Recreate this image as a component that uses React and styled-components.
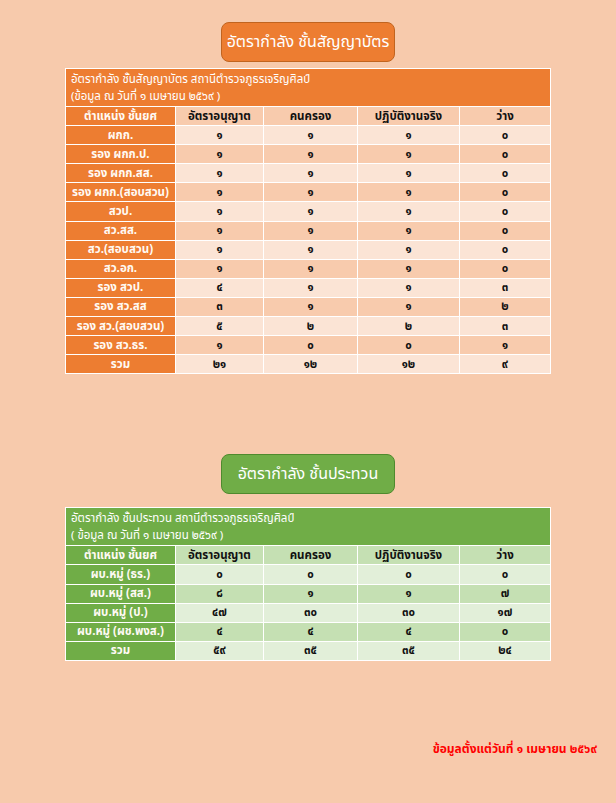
import React from "react";
import styled, { createGlobalStyle } from "styled-components";

const GlobalStyle = createGlobalStyle`
  html, body {
    margin: 0;
    padding: 0;
    background: #f7caac;
  }
  body {
    font-family: Tahoma, "Noto Sans Thai", "Noto Sans", "DejaVu Sans", sans-serif;
  }
`;

const themes = {
  orange: {
    main: "#ed7d31",
    edge: "#c1641f",
    light: "#fbe4d5",
    mid: "#f8cbad",
  },
  green: {
    main: "#70ad47",
    edge: "#4f8a2e",
    light: "#e2efd9",
    mid: "#c5e0b3",
  },
};

const Page = styled.div`
  width: 616px;
  min-height: 803px;
  padding-top: 22px;
  box-sizing: border-box;
  display: flex;
  flex-direction: column;
  align-items: center;
`;

const Section = styled.section`
  display: flex;
  flex-direction: column;
  align-items: center;
  margin-bottom: ${(p) => p.$after}px;
`;

const Pill = styled.div`
  width: 174px;
  height: 40px;
  box-sizing: border-box;
  display: flex;
  align-items: center;
  justify-content: center;
  background: ${(p) => p.$t.main};
  border: 1px solid ${(p) => p.$t.edge};
  border-radius: 8px;
  color: #fff;
  font-size: 16px;
  margin-bottom: ${(p) => p.$gap}px;
`;

const Table = styled.table`
  width: 485px;
  border-collapse: collapse;
  border: 1px solid #fff;
  font-size: 11.5px;
  table-layout: fixed;
`;

const TitleCell = styled.td`
  background: ${(p) => p.$t.main};
  color: #fff;
  text-align: left;
  padding: 2px 5px 1px;
  line-height: 17px;
  border: 1px solid #fff;
`;

const Cell = styled.td`
  height: 18.1px;
  padding: 0;
  line-height: 15px;
  border: 1px solid #fff;
  text-align: center;
  color: #111;
  font-weight: bold;
  background: ${(p) => (p.$alt ? p.$t.mid : p.$t.light)};
`;

const RankCell = styled(Cell)`
  background: ${(p) => p.$t.main};
  color: #fffaf4;
`;

const Footer = styled.div`
  align-self: flex-end;
  margin-right: 19px;
  color: #ff0000;
  font-weight: bold;
  font-size: 12px;
`;

const widths = [110, 88, 94, 102, 91];

function RateTable({ t, title, note, rows }) {
  return (
    <Table>
      <colgroup>
        {widths.map((w, i) => (
          <col key={i} style={{ width: w }} />
        ))}
      </colgroup>
      <tbody>
        <tr>
          <TitleCell $t={t} colSpan={5}>
            {title}
            <br />
            {note}
          </TitleCell>
        </tr>
        <tr>
          <RankCell $t={t}>ตำแหน่ง ชั้นยศ</RankCell>
          {["อัตราอนุญาต", "คนครอง", "ปฏิบัติงานจริง", "ว่าง"].map((h) => (
            <Cell key={h} $t={t} $alt>
              {h}
            </Cell>
          ))}
        </tr>
        {rows.map((r, i) => (
          <tr key={r[0]}>
            <RankCell $t={t}>{r[0]}</RankCell>
            {r.slice(1).map((v, j) => (
              <Cell key={j} $t={t} $alt={i % 2 === 1}>
                {v}
              </Cell>
            ))}
          </tr>
        ))}
      </tbody>
    </Table>
  );
}

const officers = [
  ["ผกก.", "๑", "๑", "๑", "๐"],
  ["รอง ผกก.ป.", "๑", "๑", "๑", "๐"],
  ["รอง ผกก.สส.", "๑", "๑", "๑", "๐"],
  ["รอง ผกก.(สอบสวน)", "๑", "๑", "๑", "๐"],
  ["สวป.", "๑", "๑", "๑", "๐"],
  ["สว.สส.", "๑", "๑", "๑", "๐"],
  ["สว.(สอบสวน)", "๑", "๑", "๑", "๐"],
  ["สว.อก.", "๑", "๑", "๑", "๐"],
  ["รอง สวป.", "๔", "๑", "๑", "๓"],
  ["รอง สว.สส", "๓", "๑", "๑", "๒"],
  ["รอง สว.(สอบสวน)", "๕", "๒", "๒", "๓"],
  ["รอง สว.ธร.", "๑", "๐", "๐", "๑"],
  ["รวม", "๒๑", "๑๒", "๑๒", "๙"],
];

const ncos = [
  ["ผบ.หมู่ (ธร.)", "๐", "๐", "๐", "๐"],
  ["ผบ.หมู่ (สส.)", "๘", "๑", "๑", "๗"],
  ["ผบ.หมู่ (ป.)", "๔๗", "๓๐", "๓๐", "๑๗"],
  ["ผบ.หมู่ (ผช.พงส.)", "๔", "๔", "๔", "๐"],
  ["รวม", "๕๙", "๓๕", "๓๕", "๒๔"],
];

export default function App() {
  return (
    <>
      <GlobalStyle />
      <Page>
        <Section $after={80}>
          <Pill $t={themes.orange} $gap={6}>
            อัตรากำลัง ชั้นสัญญาบัตร
          </Pill>
          <RateTable
            t={themes.orange}
            title="อัตรากำลัง ชั้นสัญญาบัตร สถานีตำรวจภูธรเจริญศิลป์"
            note="(ข้อมูล ณ วันที่ ๑ เมษายน ๒๕๖๙ )"
            rows={officers}
          />
        </Section>
        <Section $after={79}>
          <Pill $t={themes.green} $gap={13}>
            อัตรากำลัง ชั้นประทวน
          </Pill>
          <RateTable
            t={themes.green}
            title="อัตรากำลัง ชั้นประทวน สถานีตำรวจภูธรเจริญศิลป์"
            note="( ข้อมูล ณ วันที่ ๑ เมษายน ๒๕๖๙ )"
            rows={ncos}
          />
        </Section>
        <Footer>ข้อมูลตั้งแต่วันที่ ๑ เมษายน ๒๕๖๙</Footer>
      </Page>
    </>
  );
}
